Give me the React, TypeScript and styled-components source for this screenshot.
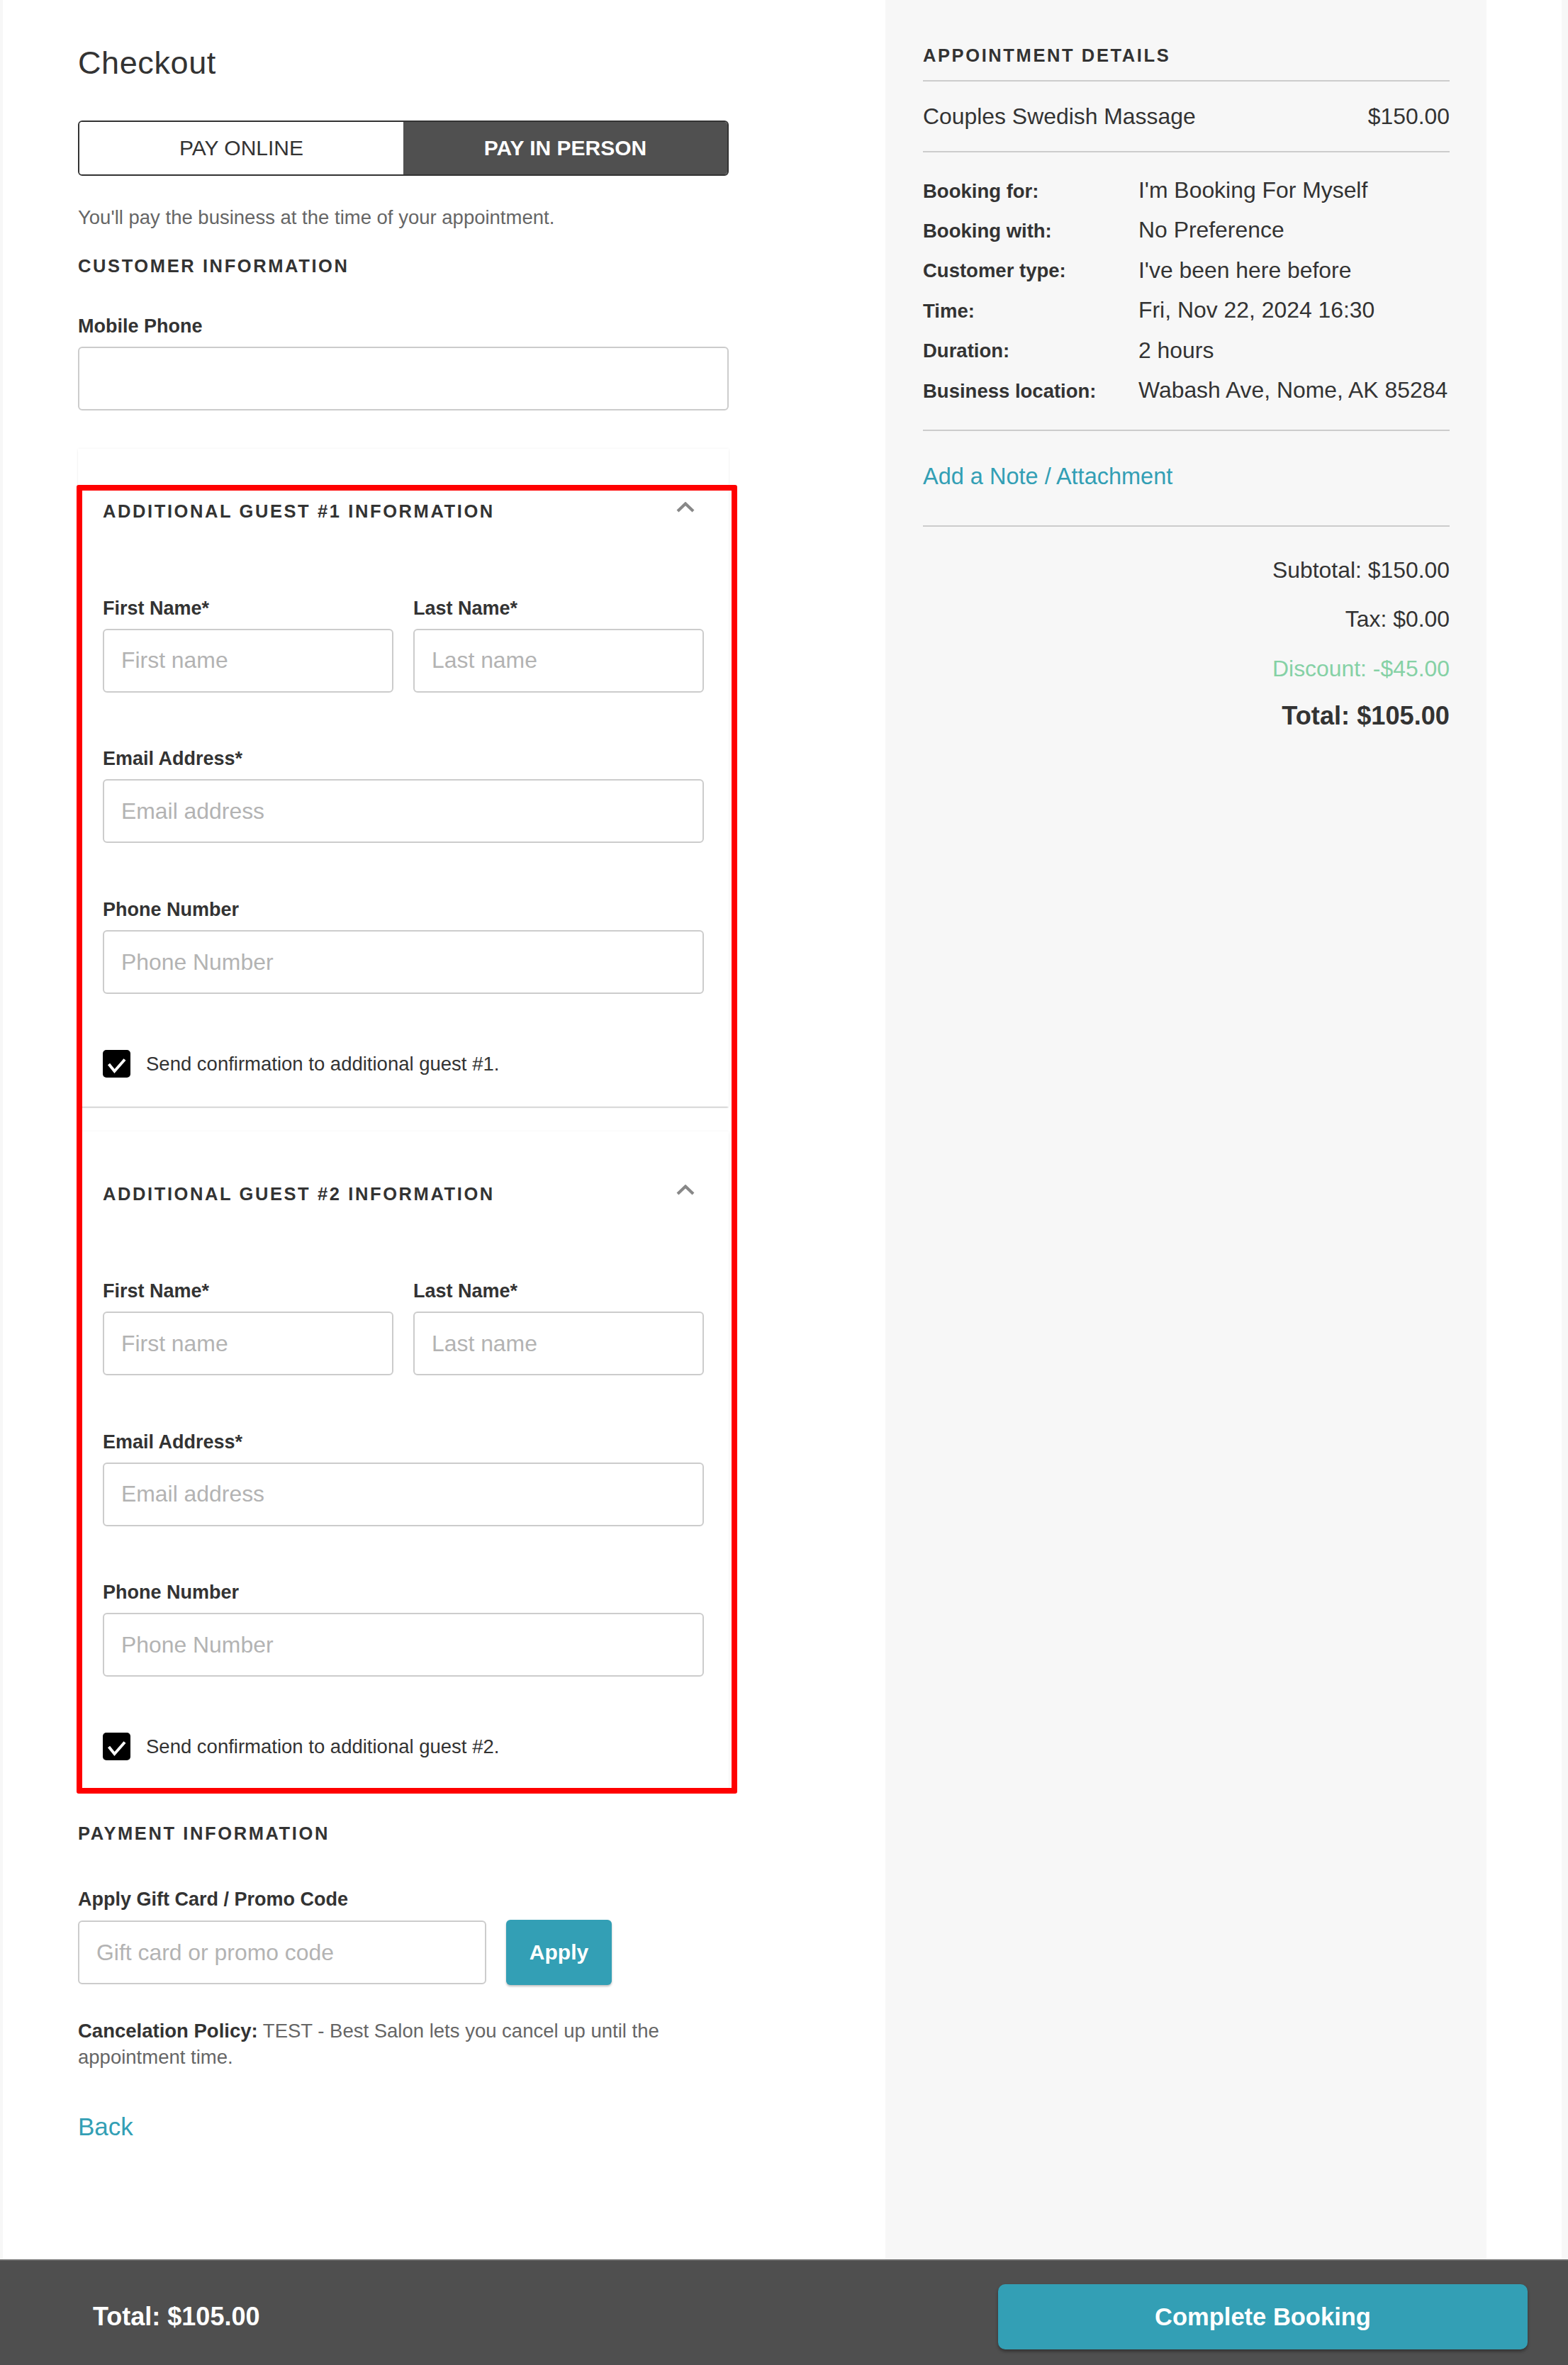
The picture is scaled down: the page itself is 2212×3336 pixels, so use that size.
import React from 'react';
import styled, { createGlobalStyle } from 'styled-components';

const teal = '#339fb5';
const ink = '#333333';
const fontStack = '"Liberation Sans", Arial, Helvetica, sans-serif';

const GlobalStyle = createGlobalStyle`
  html, body {
    margin: 0;
    padding: 0;
    background: #f7f7f7;
    font-family: ${fontStack};
    color: ${ink};
  }
  * {
    box-sizing: border-box;
  }
`;

const Page = styled.div`
  height: 3336px;
  display: flex;
  flex-direction: column;
  overflow: hidden;
`;

const Main = styled.div`
  flex: 1;
  display: flex;
  margin-left: 4px;
  width: 2199px;
  background: #fff;
  min-height: 0;
`;

const LeftColumn = styled.section`
  width: 1245px;
  padding: 64px 0 0 106px;
`;

const Content = styled.div`
  width: 918px;
`;

const Title = styled.h1`
  margin: 0;
  font-size: 45px;
  line-height: 50px;
  font-weight: 400;
  letter-spacing: 0.6px;
  color: ${ink};
`;

const Toggle = styled.div`
  margin-top: 56px;
  display: flex;
  height: 78px;
  border: 2px solid ${ink};
  border-radius: 6px;
  overflow: hidden;
`;

const ToggleOption = styled.button<{ $active?: boolean }>`
  flex: 1;
  border: none;
  margin: 0;
  font-family: ${fontStack};
  font-size: 30px;
  font-weight: ${(p) => (p.$active ? 700 : 400)};
  background: ${(p) => (p.$active ? '#505050' : '#fff')};
  color: ${(p) => (p.$active ? '#fff' : ink)};
  cursor: pointer;
`;

const Note = styled.p`
  margin: 42.5px 0 0;
  font-size: 27.5px;
  line-height: 32px;
  color: #666;
`;

const SectionTitle = styled.h2<{ $mt?: number }>`
  margin: ${(p) => p.$mt ?? 0}px 0 0;
  font-size: 25.5px;
  line-height: 30px;
  font-weight: 700;
  letter-spacing: 2.6px;
  text-transform: uppercase;
  color: ${ink};
`;

const Field = styled.div<{ $mt?: number }>`
  display: flex;
  flex-direction: column;
  margin-top: ${(p) => p.$mt ?? 0}px;
`;

const Label = styled.label`
  font-size: 27px;
  line-height: 32px;
  font-weight: 700;
  color: ${ink};
  margin-bottom: 13px;
`;

const TextInput = styled.input`
  width: 100%;
  height: 90px;
  border: 2px solid #cccccc;
  border-radius: 6px;
  padding: 0 24px;
  font-family: ${fontStack};
  font-size: 31.9px;
  color: ${ink};
  background: #fff;
  outline: none;
  &::placeholder {
    color: #b3b3b3;
  }
`;

const Guests = styled.div`
  position: relative;
  margin-top: 54px;
`;

const Highlight = styled.div`
  position: absolute;
  top: 51px;
  left: -2px;
  right: -12px;
  bottom: -6px;
  border: 8px solid #ff0000;
  border-radius: 3px;
  pointer-events: none;
`;

const GuestCard = styled.div`
  background: #fff;
  padding: 73px 35px 41px;
  box-shadow: 0 2px 2px -1px rgba(0, 0, 0, 0.28), 0 0 3px rgba(0, 0, 0, 0.06);
  & + & {
    margin-top: 35px;
  }
`;

const CardHeader = styled.div`
  display: flex;
  justify-content: space-between;
  align-items: flex-start;
`;

const Chevron = styled.svg`
  margin: 2px 13px 0 0;
  flex: none;
`;

const FieldStack = styled.div`
  margin-top: 106px;
  display: flex;
  flex-direction: column;
  gap: 77.7px;
`;

const NameRow = styled.div`
  display: grid;
  grid-template-columns: 1fr 1fr;
  gap: 28px;
`;

const CheckRow = styled.div`
  margin-top: 79px;
  display: flex;
  align-items: center;
  gap: 22px;
  height: 39px;
  font-size: 27.5px;
  color: ${ink};
`;

const PromoRow = styled.div`
  display: flex;
  align-items: center;
  gap: 28px;
`;

const PromoInput = styled(TextInput)`
  width: 576px;
`;

const ApplyButton = styled.button`
  width: 149px;
  height: 92px;
  border: none;
  border-radius: 6px;
  background: ${teal};
  color: #fff;
  font-family: ${fontStack};
  font-size: 30px;
  font-weight: 700;
  box-shadow: 0 2px 3px rgba(0, 0, 0, 0.25);
`;

const Policy = styled.p`
  margin: 46px 0 0;
  font-size: 27.5px;
  line-height: 37px;
  color: #666;
  strong {
    color: ${ink};
  }
`;

const BackLink = styled.a`
  display: block;
  margin-top: 60px;
  font-size: 35px;
  line-height: 40px;
  color: ${teal};
  text-decoration: none;
`;

const Aside = styled.aside`
  width: 848px;
  background: #f7f7f7;
  padding: 63px 52px 0 53px;
`;

const Divider = styled.div<{ $mt?: number }>`
  height: 2px;
  background: #cccccc;
  margin-top: ${(p) => p.$mt ?? 0}px;
`;

const ServiceRow = styled.div`
  display: flex;
  justify-content: space-between;
  padding: 30px 0;
  font-size: 31.9px;
  line-height: 38px;
  color: ${ink};
`;

const Details = styled.dl`
  margin: 0;
  padding: 34px 0 37px;
  display: grid;
  grid-template-columns: 304px 1fr;
  grid-auto-rows: 38px;
  row-gap: 18.4px;
  align-items: start;
`;

const DetailLabel = styled.dt`
  padding-top: 1.6px;
  font-size: 27.5px;
  line-height: 38px;
  font-weight: 700;
  color: ${ink};
`;

const DetailValue = styled.dd`
  margin: 0;
  font-size: 31.9px;
  line-height: 38px;
  color: ${ink};
  white-space: nowrap;
`;

const NoteLink = styled.a`
  display: block;
  padding: 45px 0 50px;
  font-size: 32.5px;
  line-height: 38px;
  color: ${teal};
  text-decoration: none;
`;

const Totals = styled.div`
  padding-top: 42px;
  display: flex;
  flex-direction: column;
  align-items: flex-end;
  gap: 31.5px;
`;

const TotalLine = styled.div<{ $tone?: 'discount' | 'grand' }>`
  font-size: ${(p) => (p.$tone === 'grand' ? '36.2px' : '31.9px')};
  line-height: ${(p) => (p.$tone === 'grand' ? '42px' : '38px')};
  font-weight: ${(p) => (p.$tone === 'grand' ? 700 : 400)};
  margin-top: ${(p) => (p.$tone === 'grand' ? '-4px' : '0')};
  color: ${(p) => (p.$tone === 'discount' ? '#85d1a5' : ink)};
`;

const Footer = styled.footer`
  height: 149px;
  flex: none;
  background: #4f4f4f;
  border-top: 2px solid #6a6a6a;
  display: flex;
  justify-content: space-between;
  align-items: flex-start;
  padding: 33px 57px 0 131px;
`;

const FooterTotal = styled.div`
  font-size: 36px;
  line-height: 92px;
  font-weight: 700;
  color: #fff;
`;

const CompleteButton = styled.button`
  width: 747px;
  height: 92px;
  border: none;
  border-radius: 10px;
  background: ${teal};
  color: #fff;
  font-family: ${fontStack};
  font-size: 34.5px;
  font-weight: 700;
  box-shadow: 0 3px 4px rgba(0, 0, 0, 0.35);
`;

function ChevronUp() {
  return (
    <Chevron width="26" height="15" viewBox="0 0 26 15">
      <path d="M2 13 L13 2.5 L24 13" fill="none" stroke="#888" strokeWidth="4.2" />
    </Chevron>
  );
}

function CheckMark() {
  return (
    <svg width="39" height="39" viewBox="0 0 39 39">
      <rect width="39" height="39" rx="5" fill="#000" />
      <path d="M8.5 20 L16.5 30 L31 13.5" fill="none" stroke="#fff" strokeWidth="4" />
    </svg>
  );
}

function GuestForm({ index }: { index: number }) {
  return (
    <GuestCard>
      <CardHeader>
        <SectionTitle>Additional Guest #{index} Information</SectionTitle>
        <ChevronUp />
      </CardHeader>
      <FieldStack>
        <NameRow>
          <Field>
            <Label>First Name*</Label>
            <TextInput placeholder="First name" />
          </Field>
          <Field>
            <Label>Last Name*</Label>
            <TextInput placeholder="Last name" />
          </Field>
        </NameRow>
        <Field>
          <Label>Email Address*</Label>
          <TextInput placeholder="Email address" />
        </Field>
        <Field>
          <Label>Phone Number</Label>
          <TextInput placeholder="Phone Number" />
        </Field>
      </FieldStack>
      <CheckRow>
        <CheckMark />
        <span>Send confirmation to additional guest #{index}.</span>
      </CheckRow>
    </GuestCard>
  );
}

const details: [string, string][] = [
  ['Booking for:', "I'm Booking For Myself"],
  ['Booking with:', 'No Preference'],
  ['Customer type:', "I've been here before"],
  ['Time:', 'Fri, Nov 22, 2024 16:30'],
  ['Duration:', '2 hours'],
  ['Business location:', 'Wabash Ave, Nome, AK 85284'],
];

export default function App() {
  return (
    <Page>
      <GlobalStyle />
      <Main>
        <LeftColumn>
          <Content>
            <Title>Checkout</Title>
            <Toggle>
              <ToggleOption>PAY ONLINE</ToggleOption>
              <ToggleOption $active>PAY IN PERSON</ToggleOption>
            </Toggle>
            <Note>You'll pay the business at the time of your appointment.</Note>
            <SectionTitle $mt={37.5}>Customer Information</SectionTitle>
            <Field $mt={53.7}>
              <Label>Mobile Phone</Label>
              <TextInput />
            </Field>

            <Guests>
              <GuestForm index={1} />
              <GuestForm index={2} />
              <Highlight />
            </Guests>

            <SectionTitle $mt={47}>Payment Information</SectionTitle>
            <Field $mt={61.7}>
              <Label>Apply Gift Card / Promo Code</Label>
              <PromoRow>
                <PromoInput placeholder="Gift card or promo code" />
                <ApplyButton>Apply</ApplyButton>
              </PromoRow>
            </Field>
            <Policy>
              <strong>Cancelation Policy:</strong> TEST - Best Salon lets you cancel up until the
              <br />
              appointment time.
            </Policy>
            <BackLink href="#">Back</BackLink>
          </Content>
        </LeftColumn>

        <Aside>
          <SectionTitle>Appointment Details</SectionTitle>
          <Divider $mt={20} />
          <ServiceRow>
            <span>Couples Swedish Massage</span>
            <span>$150.00</span>
          </ServiceRow>
          <Divider />
          <Details>
            {details.map(([label, value]) => (
              <React.Fragment key={label}>
                <DetailLabel>{label}</DetailLabel>
                <DetailValue>{value}</DetailValue>
              </React.Fragment>
            ))}
          </Details>
          <Divider />
          <NoteLink href="#">Add a Note / Attachment</NoteLink>
          <Divider />
          <Totals>
            <TotalLine>Subtotal: $150.00</TotalLine>
            <TotalLine>Tax: $0.00</TotalLine>
            <TotalLine $tone="discount">Discount: -$45.00</TotalLine>
            <TotalLine $tone="grand">Total: $105.00</TotalLine>
          </Totals>
        </Aside>
      </Main>

      <Footer>
        <FooterTotal>Total: $105.00</FooterTotal>
        <CompleteButton>Complete Booking</CompleteButton>
      </Footer>
    </Page>
  );
}
